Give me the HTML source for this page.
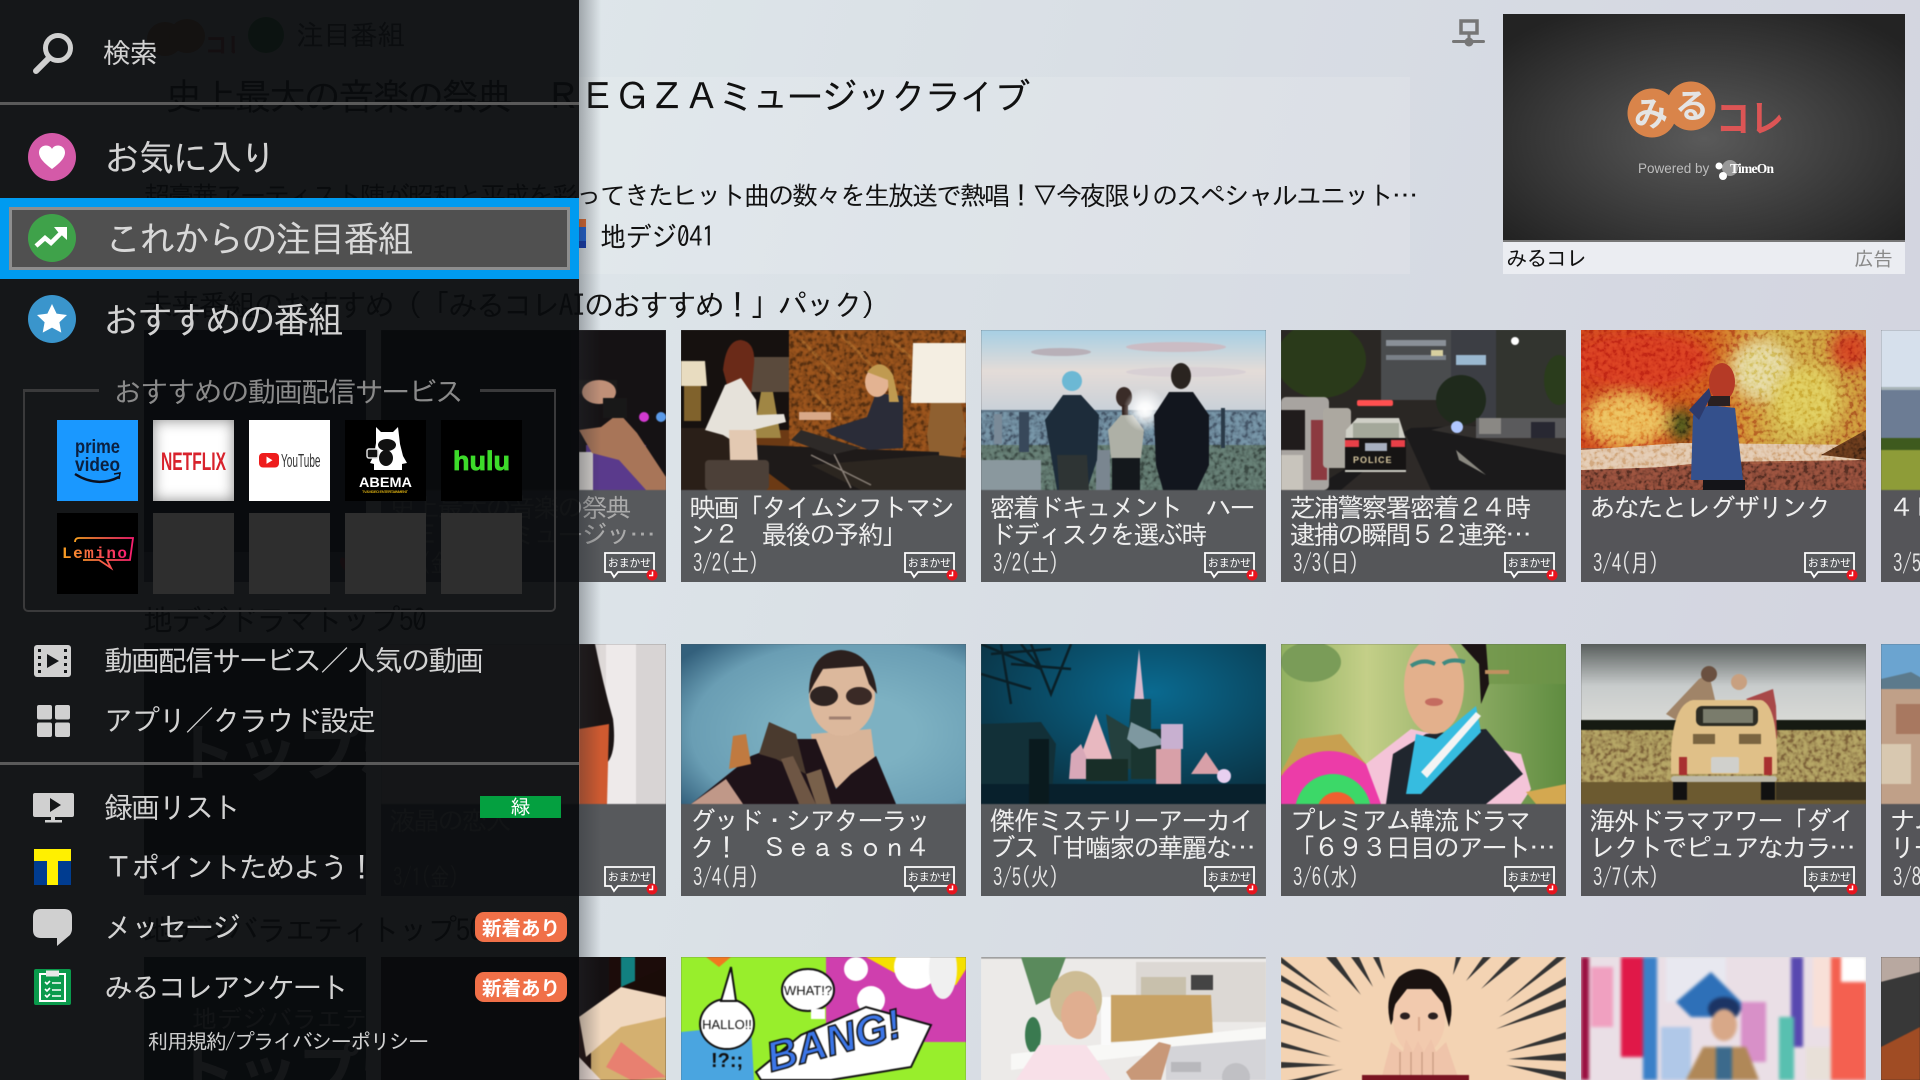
<!DOCTYPE html>
<html lang="ja"><head><meta charset="utf-8"><title>みるコレ</title>
<style>
html,body{margin:0;padding:0;width:1920px;height:1080px;overflow:hidden;background:#d8dce4}
*{box-sizing:border-box}
body{font-family:"IPAGothic","Noto Sans CJK JP",sans-serif;position:relative}
.a{position:absolute;white-space:nowrap}
#bg{position:absolute;inset:0;background:linear-gradient(105deg,#dee6ea 25%,#d9dfe5 50%,#d3d5e0 90%)}
.c{position:absolute;width:285px;height:252px;background:#57595c;overflow:hidden}
.c>svg.i{position:absolute;left:0;top:0;width:285px;height:160px;display:block;filter:blur(.6px)}
.t{position:absolute;left:8.5px;top:164.5px;font-size:26px;letter-spacing:-2px;line-height:27px;color:#eee;white-space:nowrap}
.d{position:absolute;left:12px;top:222px;font-size:25px;line-height:24px;color:#e6e6e6;transform:scaleX(.75);transform-origin:left center;white-space:nowrap}
.o{position:absolute;left:222px;top:221px;width:56px;height:31px}
.h{position:absolute;left:143px;font-size:30px;letter-spacing:-2.3px;line-height:34px;color:#111;white-space:nowrap}
#menu{position:absolute;left:0;top:0;width:579px;height:1080px;background:rgba(10,12,14,.95)}
.m{position:absolute;left:104px;color:#d2d2d2;white-space:nowrap;font-size:29px;letter-spacing:-2px;line-height:34px}
.big{font-size:36.500px;letter-spacing:-2.500px;line-height:44px}
.ti{position:absolute;width:81px;height:81px;background:#2e2e2e}
.ti svg{display:block;width:81px;height:81px}
.nb{position:absolute;left:475px;width:92px;height:30px;background:#f07048;border-radius:9px;color:#fff;font:bold 19.5px/30px "Noto Sans CJK JP",sans-serif;text-align:center}
.nz{mix-blend-mode:overlay;opacity:.28}
</style></head><body>
<svg width="0" height="0" style="position:absolute"><defs><filter id="nzf" x="0" y="0" width="100%" height="100%"><feTurbulence type="fractalNoise" baseFrequency=".22" numOctaves="2" seed="4"/><feColorMatrix values="3 0 0 0 -1 3 0 0 0 -1 3 0 0 0 -1 0 0 0 0 1"/></filter><g id="om"><path d="M2 2H51V21H15L11 26 8 21H2Z" fill="#57595c" stroke="#fff" stroke-width="1.800"/><text x="26.500" y="15.500" text-anchor="middle" font-family="Noto Sans CJK JP" font-size="10.800" fill="#fff">おまかせ</text><circle cx="49" cy="24" r="5.500" fill="#e8141e"/><path d="M49.500 20.500V24.500H46" stroke="#fff" stroke-width="1.500" fill="none"/></g></defs></svg>
<div id="bg"></div>

<!-- top content -->
<svg class="a" style="left:145px;top:16px" width="90" height="42"><ellipse cx="20" cy="23" rx="18" ry="17" fill="#d9844a"/><ellipse cx="42" cy="20" rx="18" ry="17" fill="#d9844a"/><text x="60" y="37" font-size="22" font-weight="bold" fill="#da5555" font-family="Noto Sans CJK JP">コレ</text></svg>
<svg class="a" style="left:248px;top:17px" width="36" height="36"><circle cx="18" cy="18" r="18" fill="#3fa24a"/></svg>
<div class="a" style="left:296px;top:18px;font-size:28px;letter-spacing:-1px;line-height:34px;color:#333">注目番組</div>
<div class="a" style="left:144px;top:77px;width:1266px;height:197px;background:rgba(255,255,255,.13)"></div>
<div class="a" style="left:165.500px;top:76px;font-size:37px;letter-spacing:-2.500px;line-height:42px;color:#111">史上最大の音楽の祭典　ＲＥＧＺＡミュージックライブ</div>
<div class="a" style="left:144px;top:181px;font-size:26px;letter-spacing:-2px;line-height:30px;color:#111">超豪華アーティスト陣が昭和と平成を彩ってきたヒット曲の数々を生放送で熱唱！▽今夜限りのスペシャルユニット…</div>
<div class="a" style="left:565px;top:219px;width:21px;height:29px;background:linear-gradient(#e46a2c 0 8px,#1c62d8 8px 22px,#1038b0 22px)"></div>
<div class="a" style="left:600px;top:220px;font-size:28px;letter-spacing:-.5px;line-height:34px;color:#111;transform:scaleX(.93);transform-origin:left">地デジ041</div>
<div class="h" style="top:288px">未来番組のおすすめ（「みるコレAIのおすすめ！」パック）</div>
<div class="h" style="top:603px;letter-spacing:-1.6px">地デジドラマトップ50</div>
<div class="h" style="top:913px;letter-spacing:-1.6px">地デジバラエティトップ50</div>

<!-- hidden col -->
<div class="c" style="left:144px;top:330px;width:222px"><div class="a" style="left:0;top:0;width:222px;height:222px;background:#050a14"></div><div class="a" style="left:195px;top:222px;color:#d02a3a;font-size:24px">♥</div></div>
<div class="c" style="left:144px;top:643px;width:222px"><div class="a" style="left:0;top:0;width:222px;height:212px;background:#120808"></div><div class="a" style="left:30px;top:70px;font:bold 62px/70px 'Noto Sans CJK JP';color:#ccc">トップ50</div></div>
<div class="c" style="left:144px;top:957px;width:222px;height:123px;background:#10141c"><div class="a" style="left:48px;top:50px;font-size:25px;color:#aaa">地デジバラエティ</div><div class="a" style="left:30px;top:75px;font:bold 62px/70px 'Noto Sans CJK JP';color:#ddd">トップ50</div></div>

<!-- ROW 1 -->
<div class="c" style="left:381px;top:330px">
<svg class="i" viewBox="0 0 285 160"><rect width="285" height="160" fill="#151214"/><rect x="0" width="190" height="160" fill="#0c0c10"/><rect x="205" y="115" width="60" height="45" fill="#5a3a8c"/><rect x="198" y="122" width="14" height="38" fill="#d8d4d0"/><polygon points="198,100 220,97 238,83 256,103 285,147 285,160 265,160 238,130 211,123" fill="#a87558"/><rect x="198" y="50" width="38" height="14" fill="#1c1a1a"/><ellipse cx="218" cy="62" rx="17" ry="12" fill="#c09078"/><rect x="222" y="68" width="24" height="20" fill="#181818"/><circle cx="263" cy="87" r="5" fill="#d23ad0"/><circle cx="280" cy="87" r="5" fill="#5a9ae8"/></svg>
<div class="t" style="color:#aaa">史上最大の音楽の祭典<br>ＲＥＧＺＡミュージッ…</div><div class="d" style="color:#aaa">3/1(金)</div>
<svg class="o" viewBox="0 0 56 31"><use href="#om"/></svg></div>

<div class="c" style="left:681px;top:330px">
<svg class="i" viewBox="0 0 285 160"><rect width="285" height="160" fill="#6c3a14"/><rect x="108" width="177" height="125" fill="#7a4216"/><g stroke="#a0642a" stroke-width="3" opacity=".5"><path d="M120 10l40 40M160 5l50 50M210 10l40 35M130 60l30 30M190 60l30 30M225 55l10 20"/></g><rect class="nz" x="108" width="177" height="125" filter="url(#nzf)"/><rect width="108" height="100" fill="#16110f"/><rect x="0" y="98" width="50" height="62" fill="#2a1f18"/>
<polygon points="0,31 24,31 26,56 0,56" fill="#e8dcc0"/><rect x="3" y="56" width="17" height="35" fill="#80622c"/>
<polygon points="68,27 108,27 108,62 65,62" fill="#5a4a3c"/><polygon points="80,62 92,62 100,108 72,108" fill="#a08644"/>
<polygon points="232,13 285,13 285,73 230,73" fill="#f4eee2"/><polygon points="250,73 280,73 285,100 275,150 252,150 246,105" fill="#8f6030"/>
<polygon points="75,115 258,122 258,160 110,160 70,130" fill="#1e1a19"/><polygon points="130,135 255,125 285,128 285,160 180,160" fill="#2c2620"/><path d="M130 125l60 30M150 118l20 40" stroke="#8a8078" stroke-width="1.5"/>
<polygon points="110,110 150,125 180,118 120,100" fill="#2e2a28"/>
<path d="M42 40Q45 10 60 10Q75 12 73 35L70 65 50 70Z" fill="#6a2a18"/>
<polygon points="24,100 44,55 60,48 75,70 76,85 103,84 105,92 72,100 75,125 42,105" fill="#e6e2da"/><polygon points="48,100 75,100 78,150 55,160 50,160" fill="#e3c9b2"/>
<rect x="24" y="130" width="64" height="30" rx="4" fill="#4c4038"/>
<polygon points="145,100 186,87 195,63 222,66 222,118 188,120 150,105" fill="#2a2c38"/><ellipse cx="196" cy="52" rx="12" ry="15" fill="#e3b392"/><path d="M186 42Q200 25 212 45L218 72 208 72 207 50Z" fill="#c09a50"/><rect x="118" y="82" width="32" height="8" fill="#d8a888"/>
</svg>
<div class="t">映画「タイムシフトマシ<br>ン２　最後の予約」</div><div class="d">3/2(土)</div>
<svg class="o" viewBox="0 0 56 31"><use href="#om"/></svg></div>

<div class="c" style="left:981px;top:330px">
<svg class="i" viewBox="0 0 285 160"><defs><linearGradient id="sk" x1="0" y1="0" x2="0" y2="1"><stop offset="0" stop-color="#a6cfe4"/><stop offset=".5" stop-color="#e4dcd8"/><stop offset="1" stop-color="#c8d0d8"/></linearGradient><radialGradient id="sn"><stop offset="0" stop-color="#fff"/><stop offset=".3" stop-color="#fff" stop-opacity=".9"/><stop offset="1" stop-color="#fff" stop-opacity="0"/></radialGradient></defs><rect width="285" height="82" fill="url(#sk)"/><ellipse cx="195" cy="17" rx="50" ry="5" fill="#cbbcc4"/><ellipse cx="80" cy="22" rx="30" ry="4" fill="#b8b0b8"/><ellipse cx="205" cy="42" rx="60" ry="5" fill="#d8d0d4"/><rect y="80" width="285" height="80" fill="#5e7688"/><rect y="115" width="285" height="45" fill="#52665e"/><rect class="nz" y="82" width="285" height="78" filter="url(#nzf)"/><rect x="13" y="84" width="8" height="30" fill="#7a8a98"/><rect x="38" y="82" width="10" height="40" fill="#38485a"/><rect x="0" y="130" width="60" height="30" fill="#8a989e"/><rect x="240" y="78" width="4" height="40" fill="#2a3a48"/><rect x="115" y="120" width="14" height="40" fill="#7a8690"/>
<ellipse cx="91" cy="51" rx="10" ry="10" fill="#6cb8d4"/><polygon points="64,90 82,65 100,65 118,85 116,130 106,160 76,160 70,125" fill="#1d2c3a"/><polygon points="76,125 106,125 108,160 78,160" fill="#2e3434"/>
<ellipse cx="143" cy="67" rx="8" ry="10" fill="#3a2c28"/><rect x="141" y="75" width="6" height="30" fill="#30201c"/><polygon points="127,100 140,85 152,85 163,100 160,128 130,128" fill="#aeb0a6"/><rect x="131" y="128" width="28" height="32" fill="#14181c"/>
<circle cx="164" cy="80" r="22" fill="url(#sn)"/>
<ellipse cx="200" cy="46" rx="10" ry="13" fill="#2a2420"/><polygon points="173,85 188,62 212,62 228,85 228,135 216,160 182,160 175,135" fill="#12161e"/></svg>
<div class="t">密着ドキュメント　ハー<br>ドディスクを選ぶ時</div><div class="d">3/2(土)</div>
<svg class="o" viewBox="0 0 56 31"><use href="#om"/></svg></div>

<div class="c" style="left:1281px;top:330px;background:#555659">
<svg class="i" viewBox="0 0 285 160"><rect width="285" height="160" fill="#2a2724"/><rect x="100" width="90" height="70" fill="#4a4c4e"/><rect x="170" width="45" height="90" fill="#3c3e44"/><rect x="215" width="70" height="90" fill="#32342f"/><rect x="105" y="10" width="60" height="6" fill="#8a9098"/><rect x="105" y="25" width="60" height="5" fill="#7a8088"/><rect x="175" y="25" width="30" height="10" fill="#9ab8d0"/><rect x="150" y="20" width="12" height="6" fill="#d8d0a0"/>
<ellipse cx="40" cy="30" rx="45" ry="38" fill="#2a3a1a"/><ellipse cx="180" cy="70" rx="25" ry="25" fill="#1f2a1c"/><ellipse cx="278" cy="50" rx="15" ry="25" fill="#2a3c1c"/><circle cx="234" cy="11" r="4" fill="#fff"/>
<polygon points="30,160 130,98 285,92 285,160" fill="#1b1a1b"/><polygon points="150,100 285,125 285,100 170,95" fill="#33302e"/><polygon points="60,160 125,105 150,160" fill="#2e2a28"/><polygon points="178,130 205,145 175,120" fill="#8a8880"/>
<rect x="195" y="88" width="90" height="20" fill="#5a5a5c"/><rect x="198" y="88" width="22" height="16" fill="#8a8884"/><rect x="250" y="92" width="24" height="16" fill="#282832"/><circle cx="176" cy="97" r="6" fill="#b0c8ff"/>
<rect x="0" y="67" width="48" height="93" rx="5" fill="#a8a4a0"/><rect x="0" y="80" width="24" height="40" fill="#201c1c"/><rect x="30" y="90" width="16" height="60" fill="#8c3a40"/><rect x="42" y="78" width="28" height="60" rx="4" fill="#aca8a0"/>
<rect x="0" y="125" width="22" height="35" fill="#c8c4bc"/>
<rect x="76" y="70" width="36" height="6" rx="2" fill="#ff5050"/><polygon points="65,100 76,88 118,88 125,110 125,142 64,142" fill="#cfcfc6"/><rect x="72" y="93" width="46" height="15" fill="#a4a89a"/><rect x="64" y="108" width="61" height="32" fill="#161414"/><rect x="84" y="113" width="22" height="8" fill="#a8b0c0"/><rect x="64" y="110" width="14" height="7" fill="#e84048"/><rect x="110" y="110" width="14" height="7" fill="#e84048"/><text x="72" y="133" font-family="Liberation Sans" font-size="9" font-weight="bold" letter-spacing="1" fill="#d8c8a0">POLICE</text></svg>
<div class="t">芝浦警察署密着２４時<br>逮捕の瞬間５２連発…</div><div class="d">3/3(日)</div>
<svg class="o" viewBox="0 0 56 31"><use href="#om"/></svg></div>

<div class="c" style="left:1581px;top:330px;background:#555559">
<svg class="i" viewBox="0 0 285 160" style="filter:none"><defs><linearGradient id="au" x1="0" y1="0" x2="1" y2="0"><stop offset="0" stop-color="#c43c18"/><stop offset=".45" stop-color="#c8541c"/><stop offset=".7" stop-color="#c8a040"/><stop offset="1" stop-color="#c07a30"/></linearGradient><filter id="b6" x="-20%" y="-20%" width="140%" height="140%"><feGaussianBlur stdDeviation="7"/></filter></defs><rect width="285" height="160" fill="url(#au)"/><g filter="url(#b6)"><ellipse cx="60" cy="30" rx="70" ry="30" fill="#d0341a"/><ellipse cx="180" cy="40" rx="30" ry="30" fill="#dfd088"/><ellipse cx="225" cy="70" rx="35" ry="35" fill="#d8c050"/><ellipse cx="270" cy="20" rx="20" ry="20" fill="#c83a1c"/><ellipse cx="45" cy="90" rx="42" ry="26" fill="#e8b050"/><ellipse cx="100" cy="95" rx="14" ry="18" fill="#3c4a14"/></g><rect y="118" width="285" height="42" fill="#8c4c36"/><polygon points="0,120 100,113 285,115 285,130 130,132 0,145" fill="#dcbc9c"/><polygon points="0,140 285,130 285,160 0,160" fill="#7c4232"/><polygon points="240,125 285,100 285,130" fill="#5a3218"/><rect class="nz" width="285" height="160" filter="url(#nzf)"/><polygon points="112,85 128,75 154,78 162,150 110,150" fill="#34508c"/><rect x="122" y="150" width="42" height="10" fill="#141418"/><ellipse cx="141" cy="52" rx="13" ry="19" fill="#b53a26"/><rect x="127" y="66" width="22" height="10" fill="#2a2020"/><polygon points="108,80 128,58 130,66 118,90" fill="#2c3a6c"/></svg>
<div class="t">あなたとレグザリンク</div><div class="d">3/4(月)</div>
<svg class="o" viewBox="0 0 56 31"><use href="#om"/></svg></div>

<div class="c" style="left:1881px;top:330px;width:39px;background:#555559">
<svg class="i" viewBox="0 0 285 160"><rect width="285" height="57" fill="#d6e0ec"/><rect y="57" width="285" height="8" fill="#a8b4b8"/><rect y="60" width="285" height="50" fill="#6c7c94"/><rect y="108" width="285" height="14" fill="#3e5a1e"/><rect y="120" width="285" height="40" fill="#8e9c38"/></svg>
<div class="t">４Ｋ</div><div class="d">3/5(火)</div></div>

<!-- ROW 2 -->
<div class="c" style="left:381px;top:643.5px">
<svg class="i" viewBox="0 0 285 160"><rect width="285" height="160" fill="#ded9d8"/><rect x="225" width="30" height="160" fill="#eeeaea"/><rect x="255" width="30" height="160" fill="#d8d4d4"/><path d="M198 0H214Q222 40 232 75 236 110 225 120L198 130Z" fill="#1a1414"/><polygon points="198,85 228,80 226,160 198,160" fill="#cf5a30"/></svg>
<div class="t" style="color:#aaa">液晶の恋人</div><div class="d" style="color:#aaa">3/1(金)</div>
<svg class="o" viewBox="0 0 56 31"><use href="#om"/></svg></div>

<div class="c" style="left:681px;top:643.5px">
<svg class="i" viewBox="0 0 285 160"><defs><radialGradient id="bl" cx=".6" cy=".55" r=".75"><stop offset=".3" stop-color="#7db1c2"/><stop offset=".75" stop-color="#6a9eb4"/><stop offset="1" stop-color="#33607c"/></radialGradient></defs><rect width="285" height="160" fill="url(#bl)"/><polygon points="130,90 190,85 195,125 165,150 135,130" fill="#d8b498"/><ellipse cx="161" cy="52" rx="33" ry="40" fill="#dcb89c"/><path d="M128 50Q128 8 160 6 192 8 196 50L188 40 182 22 142 25 133 40Z" fill="#2c201e"/><ellipse cx="143" cy="52" rx="14" ry="10" fill="#2e2422"/><ellipse cx="178" cy="52" rx="13" ry="9" fill="#3a2a26"/><path d="M148 74h22" stroke="#a08070" stroke-width="3"/>
<polygon points="10,160 70,112 115,95 135,95 155,145 170,130 195,112 215,160" fill="#1e1218"/><polygon points="10,160 45,135 62,160" fill="#c09888"/><polygon points="78,110 88,78 115,90 125,130 95,115" fill="#4a3a2e"/><polygon points="48,125 52,92 65,90 70,120" fill="#c07a40"/><polygon points="100,115 112,112 135,160 118,160" fill="#6e5644"/><polygon points="125,130 140,125 150,160 135,160" fill="#78604a"/></svg>
<div class="t">グッド・シアターラッ<br>ク！　Ｓｅａｓｏｎ４</div><div class="d">3/4(月)</div>
<svg class="o" viewBox="0 0 56 31"><use href="#om"/></svg></div>

<div class="c" style="left:981px;top:643.5px">
<svg class="i" viewBox="0 0 285 160"><defs><radialGradient id="ch" cx=".6" cy=".3" r=".7"><stop offset="0" stop-color="#0a6a90"/><stop offset="1" stop-color="#0a3344"/></radialGradient></defs><rect width="285" height="160" fill="url(#ch)"/><path d="M0 0L60 25 40 0M50 0L70 50 90 0M20 0L30 60M0 30L50 45M10 10L70 5M30 20L90 25" stroke="#0a2028" stroke-width="2.500" fill="none"/><polygon points="0,80 60,78 75,100 70,160 0,160" fill="#123038"/><polygon points="158,5 163,55 153,55" fill="#d8b8cc"/><polygon points="150,55 170,55 170,85 148,85" fill="#1a3a3a"/><polygon points="115,70 135,125 95,125" fill="#e8b8c0"/><polygon points="125,70 150,85 165,125 132,125" fill="#24403e"/><rect x="150" y="85" width="50" height="50" fill="#1a3530"/><rect x="175" y="105" width="25" height="35" fill="#d8a0a8"/><polygon points="150,78 175,90 185,100 158,105 146,95" fill="#7e98a0"/><rect x="180" y="80" width="22" height="25" fill="#c8b0d0"/><polygon points="90,110 100,100 110,125 110,135 88,135" fill="#d8a8b8"/><rect x="105" y="115" width="42" height="22" fill="#182e28"/><polygon points="225,108 240,130 210,130" fill="#d8a0a8"/><circle cx="243" cy="132" r="7" fill="#e8d0f0"/><rect y="140" width="285" height="20" fill="#08202c"/><rect x="48" y="95" width="20" height="65" fill="#0a1a1e"/></svg>
<div class="t">傑作ミステリーアーカイ<br>ブス「甘噛家の華麗な…</div><div class="d">3/5(火)</div>
<svg class="o" viewBox="0 0 56 31"><use href="#om"/></svg></div>

<div class="c" style="left:1281px;top:643.5px;background:#555659">
<svg class="i" viewBox="0 0 285 160"><defs><linearGradient id="gr" x1="0" y1="0" x2="1" y2="0"><stop offset="0" stop-color="#90b060"/><stop offset=".3" stop-color="#c4cf88"/><stop offset=".7" stop-color="#88a860"/><stop offset="1" stop-color="#5f8c40"/></linearGradient></defs><rect width="285" height="160" fill="url(#gr)"/><ellipse cx="30" cy="18" rx="30" ry="20" fill="#7a9c58"/><rect x="200" y="0" width="85" height="40" fill="#6f9448" opacity=".7"/>
<polygon points="0,128 18,95 60,90 110,150 100,160 0,160" fill="#c8a050"/><circle cx="48" cy="165" r="58" fill="#ec3ca8"/><circle cx="52" cy="168" r="38" fill="#3cd868"/><circle cx="56" cy="168" r="20" fill="#f06030"/>
<polygon points="85,120 130,85 240,110 250,145 240,160 100,160" fill="#f4c4d8"/><polygon points="105,160 112,110 145,90 205,85 242,130 205,160" fill="#20262e"/><polygon points="135,90 155,95 195,62 200,88 140,150 125,150" fill="#36bce0"/><polygon points="140,128 195,68 200,72 146,134" fill="#f4f4f4"/>
<ellipse cx="153" cy="42" rx="30" ry="48" fill="#e3b08c"/><path d="M125 0H205L208 40 200 60 198 20 180 0Z" fill="#1c1414"/><rect x="204" y="26" width="24" height="4" fill="#c09060"/><path d="M130 22q12-8 24-2M162 20q8-6 22-2" stroke="#3f8a80" stroke-width="4" fill="none"/><ellipse cx="153" cy="58" rx="9" ry="4" fill="#c46c60"/><polygon points="245,148 285,140 285,160 255,160" fill="#d4a850"/></svg>
<div class="t">プレミアム韓流ドラマ<br>「６９３日目のアート…</div><div class="d">3/6(水)</div>
<svg class="o" viewBox="0 0 56 31"><use href="#om"/></svg></div>

<div class="c" style="left:1581px;top:643.5px;background:#555559">
<svg class="i" viewBox="0 0 285 160"><defs><linearGradient id="sk2" x1="0" y1="0" x2="0" y2="1"><stop offset="0" stop-color="#585e5c"/><stop offset=".5" stop-color="#c8cccc"/><stop offset="1" stop-color="#dcdcd8"/></linearGradient></defs><rect width="285" height="160" fill="#9a8550"/><rect class="nz" y="84" width="285" height="76" filter="url(#nzf)"/><rect width="285" height="84" fill="url(#sk2)"/><rect y="76" width="285" height="10" fill="#161a12"/><rect y="138" width="285" height="22" fill="#6c5a30"/><rect x="195" y="138" width="90" height="18" fill="#3a3220"/>
<polygon points="85,70 118,35 128,30 135,60 110,85" fill="#a08468"/><circle cx="128" cy="30" r="8" fill="#6a5040"/><polygon points="165,55 192,45 195,62 196,95 186,80 172,60" fill="#a84848"/><circle cx="158" cy="38" r="8" fill="#c8a080"/>
<path d="M112 56H180Q195 60 196 110V130H90V110Q92 60 112 56Z" fill="#e0c088"/><rect x="115" y="62" width="62" height="20" rx="6" fill="#2c2c24"/><rect x="122" y="65" width="50" height="14" fill="#7a7c6c"/><rect x="112" y="90" width="22" height="10" fill="#7a6440"/><rect x="158" y="90" width="22" height="10" fill="#7a6440"/><rect x="130" y="113" width="28" height="16" rx="2" fill="#d0d0cc"/><rect x="98" y="113" width="8" height="18" fill="#a83030"/><rect x="183" y="113" width="8" height="18" fill="#a83030"/><rect x="90" y="132" width="106" height="6" rx="3" fill="#bcb8a8"/><rect x="92" y="138" width="14" height="18" fill="#111"/><rect x="180" y="138" width="14" height="18" fill="#111"/></svg>
<div class="t">海外ドラマアワー「ダイ<br>レクトでピュアなカラ…</div><div class="d">3/7(木)</div>
<svg class="o" viewBox="0 0 56 31"><use href="#om"/></svg></div>

<div class="c" style="left:1881px;top:643.5px;width:39px;background:#555559">
<svg class="i" viewBox="0 0 285 160"><rect width="285" height="45" fill="#6ba4d0"/><polygon points="0,45 0,35 30,28 60,45" fill="#5c7a8c"/><rect y="45" width="285" height="115" fill="#c0a088"/><rect x="0" y="100" width="30" height="40" fill="#d8c8b0"/><rect x="15" y="60" width="25" height="30" fill="#a87860"/></svg>
<div class="t">ナム<br>リー</div><div class="d">3/8(金)</div></div>

<!-- ROW 3 -->
<div class="c" style="left:381px;top:957px;height:123px;background:#111">
<svg class="i" viewBox="0 0 285 160"><rect width="285" height="160" fill="#1c0c0a"/><rect x="240" width="14" height="30" fill="#128080"/><rect x="198" y="0" width="30" height="60" fill="#141012"/><polygon points="210,85 245,65 285,55 285,123 210,123" fill="#d4b070"/><polygon points="240,85 285,120 250,123 225,110" fill="#e88070"/><polygon points="198,60 240,30 285,30 285,60 240,70 205,100" fill="#f0d8c0"/><polygon points="240,30 285,10 285,40" fill="#1a0c08"/><polygon points="198,100 220,123 198,123" fill="#f0e0d8"/></svg></div>

<div class="c" style="left:681px;top:957px;height:123px">
<svg class="i" viewBox="0 0 285 160"><rect width="285" height="160" fill="#98ee2c"/><polygon points="145,0 285,0 285,100 145,90" fill="#cf3fae"/><polygon points="185,0 285,0 285,12 275,28 230,25" fill="#f5e000"/><polygon points="0,75 70,68 75,160 0,160" fill="#4aa5e0"/><polygon points="240,85 285,85 285,160 225,160" fill="#98ee2c"/><polygon points="25,0 50,0 38,10" fill="#f07820"/>
<ellipse cx="235" cy="10" rx="22" ry="22" fill="#fff"/><ellipse cx="262" cy="12" rx="14" ry="30" fill="#f0f0f0"/><ellipse cx="175" cy="12" rx="12" ry="12" fill="#fff"/><ellipse cx="190" cy="43" rx="14" ry="14" fill="#fff"/>
<g stroke="#111" stroke-width="2"><ellipse cx="127" cy="33" rx="26" ry="21" fill="#fff"/><ellipse cx="46" cy="67" rx="27" ry="25" fill="#fff"/><polygon points="40,44 50,10 55,44" fill="#fff"/></g><rect x="130" y="52" width="14" height="10" fill="#fff"/>
<text x="127" y="38" font-family="Liberation Sans" font-size="13" text-anchor="middle" fill="#111">WHAT!?</text><text x="46" y="72" font-family="Liberation Sans" font-size="13" text-anchor="middle" fill="#111">HALLO!!</text><text x="30" y="110" font-family="Liberation Sans" font-size="20" font-weight="bold" fill="#111">!?:;</text>
<polygon points="75,115 120,78 185,50 250,68 230,110 150,123 80,123" fill="#fff" stroke="#111" stroke-width="2"/><text x="0" y="0" transform="translate(90,115) rotate(-15)" font-family="Liberation Sans" font-size="42" font-weight="bold" font-style="italic" fill="#3c76e8" stroke="#111" stroke-width="1.5">BANG!</text></svg></div>

<div class="c" style="left:981px;top:957px;height:123px;background:#e8e6e4">
<svg class="i" viewBox="0 0 285 160"><rect width="285" height="160" fill="#eceae8"/><rect width="285" height="1.5" fill="#888"/><rect x="155" y="5" width="130" height="60" fill="#dcd8d4"/><rect x="160" y="20" width="45" height="25" fill="#c8c0ac"/><rect x="210" y="18" width="22" height="15" fill="#444"/><polygon points="40,0 85,0 70,40 55,48" fill="#5a8a5c"/><ellipse cx="52" cy="78" rx="8" ry="18" fill="#3a7a50"/><polygon points="130,38 230,38 232,80 130,85" fill="#c8a264"/><polygon points="30,97 285,70 285,85 30,113" fill="#f8f8f6"/><rect x="120" y="40" width="10" height="48" fill="#fafafa"/><polygon points="185,90 285,82 285,123 185,123" fill="#d4d4d8"/><rect x="190" y="105" width="30" height="10" fill="#b8b8bc"/><circle cx="255" cy="120" r="14" fill="#c0c0c4"/><ellipse cx="95" cy="42" rx="26" ry="28" fill="#cdbc94"/><ellipse cx="98" cy="58" rx="18" ry="24" fill="#e0ae90"/><polygon points="35,123 58,88 105,88 130,123" fill="#f8e0e8"/><polygon points="145,115 178,85 190,88 180,123 150,123" fill="#c89878"/></svg></div>

<div class="c" style="left:1281px;top:957px;height:123px;background:#f3d3b3">
<svg class="i" viewBox="0 0 285 160"><rect width="285" height="160" fill="#f3d3b3"/><g fill="#333"><polygon points="0,0 50,40 0,6"/><polygon points="0,18 58,55 0,24"/><polygon points="0,40 62,72 0,46"/><polygon points="0,62 60,85 0,66"/><polygon points="0,85 50,100 0,90"/><polygon points="0,105 55,108 0,111"/><polygon points="0,125 62,112 0,131"/><polygon points="45,0 80,38 55,0"/><polygon points="70,0 92,30 78,0"/><polygon points="92,0 104,22 98,0"/><polygon points="285,0 225,45 276,0"/><polygon points="285,20 218,60 285,28"/><polygon points="285,42 215,72 285,50"/><polygon points="285,75 225,95 285,82"/><polygon points="285,96 228,102 285,104"/><polygon points="285,115 225,108 285,123"/><polygon points="240,0 200,32 230,0"/><polygon points="210,0 185,24 202,0"/><polygon points="180,0 172,18 175,0"/><polygon points="0,150 40,125 8,160"/><polygon points="285,150 215,125 277,160"/></g><path d="M110 68Q102 40 118 20 138 4 158 20 176 42 168 70L160 40 120 40Z" fill="#1a1210"/><ellipse cx="138" cy="62" rx="26" ry="36" fill="#f2caae"/><path d="M112 50Q118 20 138 15 158 20 165 50L150 32 126 32Z" fill="#1a1210"/><ellipse cx="124" cy="59" rx="5" ry="3.500" fill="#2a2020"/><ellipse cx="152" cy="59" rx="5" ry="3.500" fill="#2a2020"/><path d="M138 60v14" stroke="#d8a88c" stroke-width="2"/><polygon points="100,123 110,85 122,95 125,82 132,95 137,84 143,95 150,82 155,95 165,85 178,123" fill="#efc4aa"/><path d="M119 95v28M130 95v28M141 95v28M152 95v28" stroke="#c89a80" stroke-width="1.200"/><rect x="81" y="118" width="107" height="8" fill="#7a1422"/></svg></div>

<div class="c" style="left:1581px;top:957px;height:123px;background:#ddd">
<svg class="i" viewBox="0 0 285 160" style="filter:blur(1.5px)"><rect width="285" height="160" fill="#eadfe6"/><rect x="0" width="8" height="123" fill="#9a1040"/><rect x="40" width="22" height="100" fill="#e01848"/><rect x="62" y="0" width="14" height="123" fill="#3a80c8"/><rect x="85" width="60" height="45" fill="#e8e8f0"/><polygon points="95,45 130,15 165,50 150,60 110,60" fill="#2e70b8"/><rect x="10" y="10" width="22" height="60" fill="#f0a0c0"/><rect x="160" y="45" width="25" height="60" fill="#d890c8"/><rect x="210" width="12" height="90" fill="#5848b0"/><rect x="232" width="18" height="70" fill="#f8e0d8"/><rect x="250" width="35" height="123" fill="#f46050"/><rect x="260" width="25" height="25" fill="#fff"/><rect x="198" y="60" width="15" height="63" fill="#58c0b0"/><rect x="80" y="70" width="30" height="53" fill="#b0c8e8"/><rect x="225" y="90" width="25" height="33" fill="#e8e0d8"/><ellipse cx="143" cy="52" rx="16" ry="12" fill="#1c3464"/><ellipse cx="143" cy="68" rx="13" ry="16" fill="#d8a888"/><polygon points="105,123 122,90 165,90 178,123" fill="#b08858"/><rect x="135" y="90" width="16" height="33" fill="#3c6a8c"/></svg></div>

<div class="c" style="left:1881px;top:957px;width:39px;height:123px;background:#333">
<svg class="i" viewBox="0 0 285 160"><rect width="285" height="160" fill="#2a2624"/><polygon points="0,0 39,0 39,15 0,25" fill="#b8a8a0"/><polygon points="0,25 39,15 39,70 0,90" fill="#383838"/><polygon points="0,90 39,70 39,123 0,123" fill="#a04c24"/></svg></div>

<!-- right top -->
<svg class="a" style="left:1450px;top:17px" width="38" height="32" viewBox="0 0 38 32"><rect x="11" y="4" width="16" height="12" fill="none" stroke="#767676" stroke-width="3.5"/><rect x="17.5" y="16" width="3" height="6" fill="#767676"/><rect x="2" y="23" width="33" height="3" rx="1.5" fill="#767676"/><circle cx="19" cy="25" r="4.5" fill="#767676"/></svg>
<div class="a" style="left:1503px;top:14px;width:402px;height:260px;background:#ebedf2">
<svg width="402" height="228" style="display:block" viewBox="0 0 402 228"><defs><radialGradient id="ad" cx=".5" cy=".55" r=".65"><stop offset="0" stop-color="#5a5a5a"/><stop offset="1" stop-color="#232323"/></radialGradient></defs><rect width="402" height="227" fill="url(#ad)"/><rect y="226" width="402" height="2" fill="#777"/>
<circle cx="149" cy="99" r="24.5" fill="#d9844a"/><circle cx="188" cy="92" r="24.5" fill="#d9844a"/><rect x="150" y="88" width="36" height="16" fill="#d9844a"/>
<text x="148" y="112" text-anchor="middle" font-family="Noto Sans CJK JP" font-weight="bold" font-size="34" fill="#e4e4e4">み</text><text x="189" y="104" text-anchor="middle" font-family="Noto Sans CJK JP" font-weight="bold" font-size="34" fill="#e4e4e4">る</text>
<text x="213" y="118" font-family="Noto Sans CJK JP" font-weight="bold" font-size="38" textLength="68" lengthAdjust="spacingAndGlyphs" fill="#dc5555">コレ</text>
<text x="135" y="159" font-family="Liberation Sans" font-size="13.5" fill="#bdbdbd">Powered by</text>
<circle cx="227" cy="154" r="8" fill="#999"/><circle cx="220" cy="162" r="4" fill="#fff"/><circle cx="216" cy="152" r="3.5" fill="#fff"/><text x="227" y="159" font-family="Liberation Serif" font-weight="bold" font-size="13.5" textLength="44" fill="#fff">TimeOn</text></svg>
<div class="a" style="left:3px;top:231px;font-size:21.500px;letter-spacing:-1.500px;line-height:26px;color:#111">みるコレ</div>
<div class="a" style="left:351px;top:232px;font-size:20px;letter-spacing:-1px;line-height:26px;color:#8a8a8a">広告</div>
</div>

<!-- shadow -->
<div class="a" style="left:579px;top:0;width:22px;height:1080px;background:linear-gradient(90deg,rgba(40,44,50,.34),rgba(40,44,50,0))"></div>

<!-- MENU -->
<div id="menu">
<svg class="a" style="left:30px;top:28px" width="48" height="48" viewBox="0 0 48 48"><circle cx="28" cy="20" r="12.5" fill="none" stroke="#d0d0d0" stroke-width="5"/><path d="M19 30L6 43" stroke="#d0d0d0" stroke-width="6" stroke-linecap="round"/></svg>
<div class="m" style="left:103px;top:36px;font-size:28px;letter-spacing:-1.500px">検索</div>
<div class="a" style="left:0;top:102px;width:579px;height:3px;background:#5a5a5a"></div>

<svg class="a" style="left:28px;top:133px" width="48" height="48" viewBox="0 0 48 48"><circle cx="24" cy="24" r="24" fill="#d45aa8"/><path d="M24 36C13 28 11 23 11 19.5 11 15 14.5 12.5 18 12.5 21 12.5 23 14 24 16 25 14 27 12.5 30 12.5 33.5 12.5 37 15 37 19.5 37 23 35 28 24 36Z" fill="#fff"/></svg>
<div class="m big" style="top:136px">お気に入り</div>

<div class="a" style="left:0;top:198px;width:579px;height:81px;background:#009bf0"></div>
<div class="a" style="left:9px;top:207px;width:561px;height:63px;background:#505050;border:3px solid #8e8e8e"></div>
<svg class="a" style="left:28px;top:214px" width="48" height="48" viewBox="0 0 48 48"><circle cx="24" cy="24" r="24" fill="#3fa24a"/><path d="M8 32L17 24 23 29 36 16" stroke="#fff" stroke-width="4.5" fill="none"/><path d="M26 13H39V26L33.5 21 30 18Z" fill="#fff"/></svg>
<div class="m big" style="left:105px;top:217px;color:#d8d8d8">これからの注目番組</div>

<svg class="a" style="left:28px;top:295px" width="48" height="48" viewBox="0 0 48 48"><circle cx="24" cy="24" r="24" fill="#3a95cc"/><path d="M24 9l4.6 9.6 10.4 1.4-7.6 7.2 1.9 10.4L24 32.6 14.700 37.600l1.900-10.400L9 20l10.400-1.400Z" fill="#fff"/></svg>
<div class="m big" style="left:103px;top:298px">おすすめの番組</div>

<div class="a" style="left:23px;top:389px;width:533px;height:223px;border:2.5px solid #3a3a3b;border-top:0;border-radius:0 0 5px 5px"></div>
<div class="a" style="left:23px;top:389px;width:76px;height:2.5px;background:#3a3a3b"></div>
<div class="a" style="left:480px;top:389px;width:76px;height:2.5px;background:#3a3a3b"></div>
<div class="a" style="left:113.500px;top:375px;font-size:28.500px;letter-spacing:-1.700px;line-height:34px;color:#8a8a8a">おすすめの動画配信サービス</div>

<div class="ti" style="left:57px;top:420px;background:#1a98ff"><svg viewBox="0 0 81 81"><text x="18" y="33" font-family="Liberation Sans" font-weight="bold" font-size="19" textLength="45" lengthAdjust="spacingAndGlyphs" fill="#0b2040">prime</text><text x="18" y="51" font-family="Liberation Sans" font-weight="bold" font-size="19" textLength="45" lengthAdjust="spacingAndGlyphs" fill="#0b2040">video</text><path d="M18 54Q40 68 62 57" stroke="#0a1020" stroke-width="2.500" fill="none"/><path d="M57 54l6-1-1 6" stroke="#0a1020" stroke-width="1.600" fill="none"/></svg></div>
<div class="ti" style="left:153px;top:420px;background:#fff;box-shadow:inset 0 0 14px #888"><svg viewBox="0 0 81 81"><text x="8" y="50" font-family="Liberation Sans" font-weight="bold" font-size="25" textLength="65" lengthAdjust="spacingAndGlyphs" fill="#d8222c">NETFLIX</text></svg></div>
<div class="ti" style="left:249px;top:420px;background:#fff"><svg viewBox="0 0 81 81"><rect x="10" y="33" width="20" height="14.500" rx="4" fill="#ee1c1c"/><path d="M17.500 36.500l6 3.700-6 3.700Z" fill="#fff"/><text x="32" y="47" font-family="Liberation Sans" font-size="18" textLength="39.500" lengthAdjust="spacingAndGlyphs" fill="#333">YouTube</text></svg></div>
<div class="ti" style="left:345px;top:420px;background:#000"><svg viewBox="0 0 81 81"><path d="M31 7l5 5h12l5-5 2 17 3 12 4 7-5 1v6H29v-6l-4-1 4-8 2-12Z" fill="#fff"/><ellipse cx="42" cy="25" rx="9" ry="6" fill="#111"/><ellipse cx="41" cy="38" rx="7" ry="8" fill="#111"/><rect x="22" y="29" width="11" height="9" rx="2" fill="#111" stroke="#ddd" stroke-width="1.500"/><text x="14" y="67" font-family="Liberation Sans" font-weight="bold" font-size="14" textLength="53" lengthAdjust="spacingAndGlyphs" fill="#fff">ABEMA</text><text x="17" y="73" font-family="Liberation Sans" font-weight="bold" font-size="4" textLength="46" fill="#c8a010">TV&amp;VIDEO ENTERTAINMENT</text></svg></div>
<div class="ti" style="left:441px;top:420px;background:#000"><svg viewBox="0 0 81 81"><text x="12" y="50" font-family="Liberation Sans" font-weight="bold" font-size="27" textLength="57" lengthAdjust="spacingAndGlyphs" fill="#3ddb2a" stroke="#3ddb2a" stroke-width=".8">hulu</text></svg></div>
<div class="ti" style="left:57px;top:513px;background:#000"><svg viewBox="0 0 81 81"><defs><linearGradient id="lm" x1="0" x2="1"><stop offset="0" stop-color="#f8a020"/><stop offset="1" stop-color="#f81e70"/></linearGradient></defs><path d="M18 29Q18 25 22 25H76L73 47H50L54 55 42 47H26" stroke="url(#lm)" stroke-width="1.800" fill="none"/><text x="5" y="45" font-family="Liberation Mono" font-size="16" textLength="65" fill="url(#lm)" font-weight="bold">Lemino</text></svg></div>
<div class="ti" style="left:153px;top:513px"></div>
<div class="ti" style="left:249px;top:513px"></div>
<div class="ti" style="left:345px;top:513px"></div>
<div class="ti" style="left:441px;top:513px"></div>

<svg class="a" style="left:34px;top:645px" width="37" height="32" viewBox="0 0 37 32"><rect width="37" height="32" rx="3" fill="#d0d0d0"/><g fill="#141618"><rect x="4" y="4" width="3" height="3"/><rect x="4" y="11" width="3" height="3"/><rect x="4" y="18" width="3" height="3"/><rect x="4" y="25" width="3" height="3"/><rect x="30" y="4" width="3" height="3"/><rect x="30" y="11" width="3" height="3"/><rect x="30" y="18" width="3" height="3"/><rect x="30" y="25" width="3" height="3"/><path d="M13 9L25 16 13 23Z"/></g></svg>
<div class="m" style="top:644px">動画配信サービス／人気の動画</div>
<svg class="a" style="left:37px;top:705px" width="33" height="32" viewBox="0 0 33 32"><g fill="#d0d0d0"><rect width="15" height="14.500" rx="2"/><rect x="18" width="15" height="14.500" rx="2"/><rect y="17.500" width="15" height="14.500" rx="2"/><rect x="18" y="17.500" width="15" height="14.500" rx="2"/></g></svg>
<div class="m" style="top:704px">アプリ／クラウド設定</div>
<div class="a" style="left:0;top:762px;width:579px;height:3px;background:#5a5a5a"></div>

<svg class="a" style="left:33px;top:793px" width="41" height="30" viewBox="0 0 41 30"><rect width="41" height="24" rx="2" fill="#d0d0d0"/><path d="M17 5L28 12 17 19Z" fill="#141618"/><rect x="18" y="24" width="4" height="4" fill="#d0d0d0"/><rect x="12" y="27" width="17" height="2.500" fill="#d0d0d0"/></svg>
<div class="m" style="top:791px">録画リスト</div>
<div class="a" style="left:480px;top:796px;width:81px;height:22px;background:#04a040;color:#fff;font-size:20px;line-height:22px;text-align:center">緑</div>

<svg class="a" style="left:34px;top:849px" width="37" height="36" viewBox="0 0 37 36"><rect width="37" height="36" fill="#003c90"/><rect width="37" height="12" fill="#fff000"/><rect x="13" width="11" height="36" fill="#fff000"/></svg>
<div class="m" style="top:851px;left:104px">Ｔポイントためよう！</div>

<svg class="a" style="left:33px;top:909px" width="39" height="37" viewBox="0 0 39 37"><path d="M8 0H31Q39 0 39 8V20Q39 23 37 26L24 37V29H8Q0 29 0 21V8Q0 0 8 0Z" fill="#d0d0d0"/></svg>
<div class="m" style="top:911px;left:104px">メッセージ</div>
<div class="nb" style="top:912px">新着あり</div>

<svg class="a" style="left:34px;top:969px" width="37" height="36" viewBox="0 0 37 36"><rect width="37" height="36" rx="2" fill="#0a9a4c"/><rect x="6" y="5" width="25" height="27" fill="none" stroke="#fff" stroke-width="2"/><rect x="12" y="1.500" width="13" height="6" fill="#e8e8e8"/><g stroke="#fff" stroke-width="1.600" fill="none"><path d="M11 13l2 2 3-3M18 14h9M11 20l2 2 3-3M18 21h9M11 26l2 2 3-3M18 27h9"/></g></svg>
<div class="m" style="top:971px">みるコレアンケート</div>
<div class="nb" style="top:972px">新着あり</div>

<div class="a" style="left:147.500px;top:1029px;font-size:21px;letter-spacing:-1.630px;line-height:26px;color:#cfcfcf">利用規約/プライバシーポリシー</div>
</div>
</body></html>
